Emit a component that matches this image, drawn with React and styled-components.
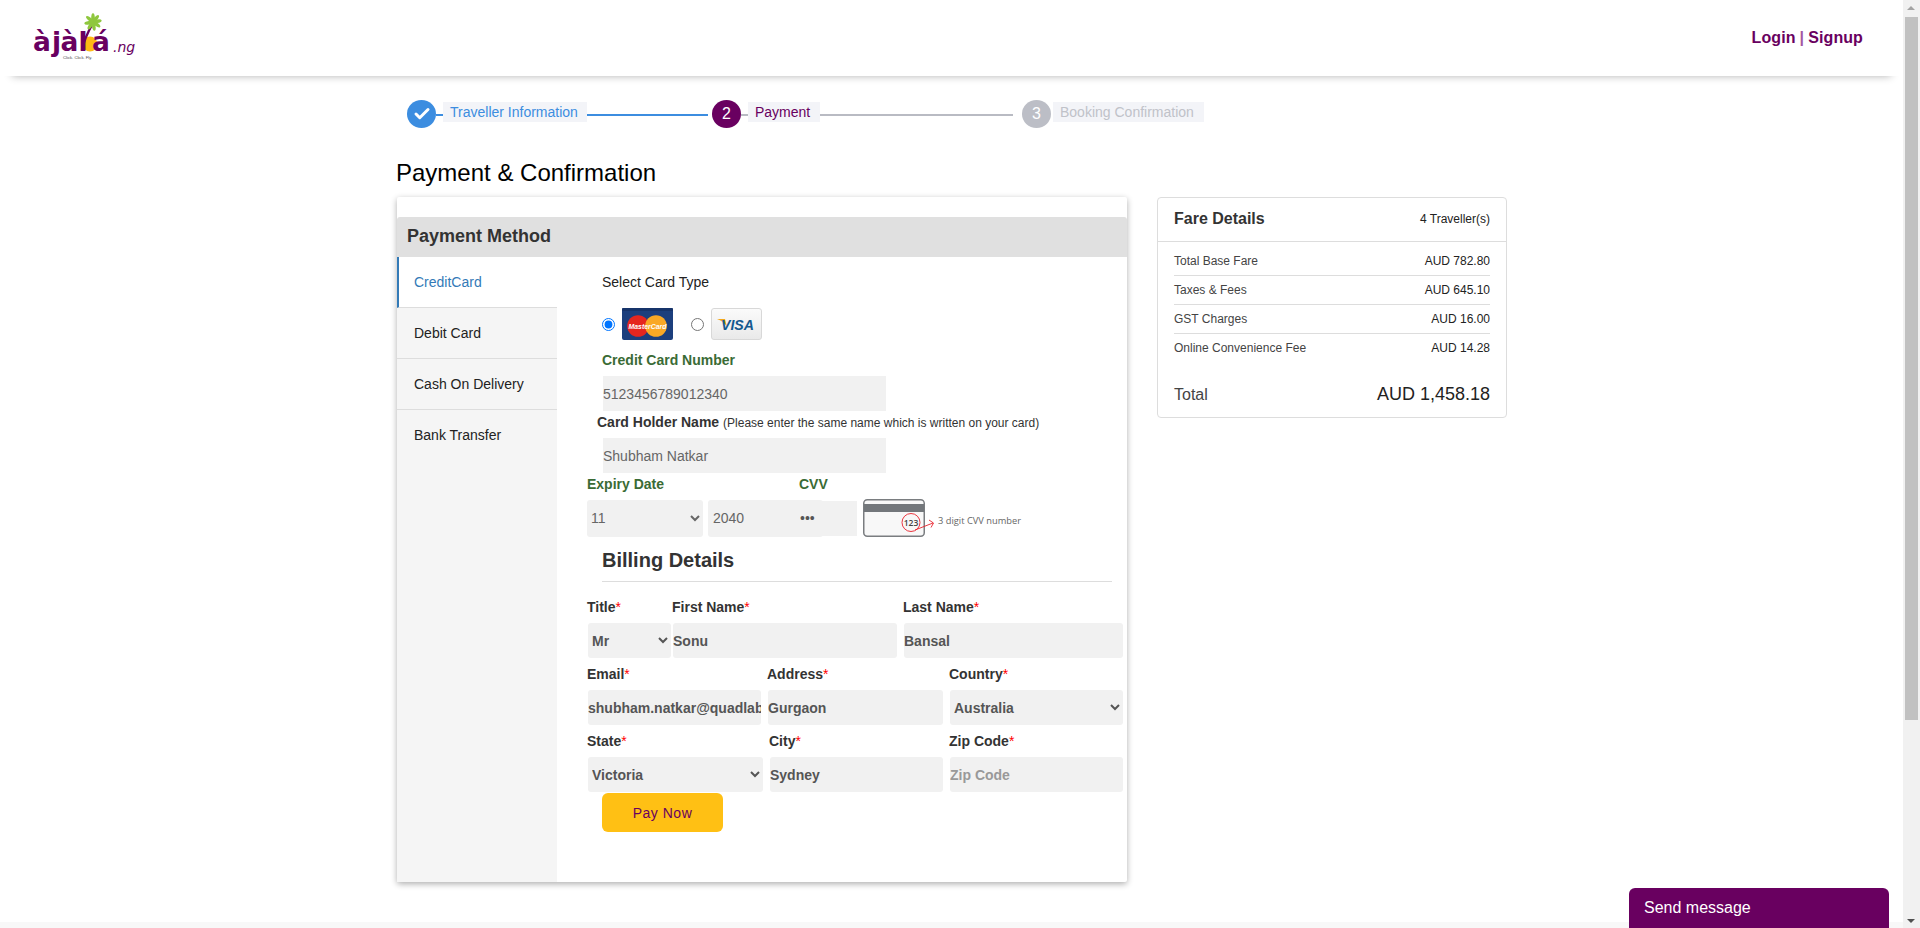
import React from "react";
import styled, { createGlobalStyle } from "styled-components";
import { Check } from "lucide-react";

const PURPLE = "#690060";
const BLUE = "#3c8de0";
const GREY = "#b9bbc3";
const GREEN = "#3a6b35";
const FIELD = "#f1f1f1";

const Global = createGlobalStyle`
  html, body { margin: 0; padding: 0; overflow: hidden; background: #fff; }
  body { font-family: "Liberation Sans", Arial, sans-serif; font-size: 14px; color: #222; }
  * { box-sizing: border-box; }
`;

const Page = styled.div`
  width: 1903px;
  height: 928px;
  display: flex;
  flex-direction: column;
`;

const Header = styled.header`
  height: 76px;
  flex: none;
  padding: 0 40px 0 30px;
  display: flex;
  align-items: center;
  justify-content: space-between;
  background: #fff;
  box-shadow: 0 12px 8px -12px rgba(0, 0, 0, 0.3);
`;

const LogoWrap = styled.a`
  display: block;
  width: 110px;
  height: 52px;
`;

const AuthLinks = styled.div`
  font-size: 16px;
  font-weight: bold;
  color: ${PURPLE};
  letter-spacing: 0.1px;
`;

const Sep = styled.span`
  color: #a4589f;
  margin: 0 4px;
`;

const Main = styled.main`
  width: 1111px;
  margin: 0 auto;
  flex: 1;
`;

const Stepper = styled.div`
  margin-top: 24px;
  padding-left: 11px;
  height: 28px;
  display: flex;
  align-items: center;
`;

const Circle = styled.div`
  width: 29px;
  height: 28px;
  flex: none;
  border-radius: 50%;
  background: ${(p) => p.$color};
  color: #fff;
  font-size: 16px;
  display: flex;
  align-items: center;
  justify-content: center;
  margin-left: ${(p) => p.$gap || 0}px;
`;

const StepLine = styled.div`
  height: 2px;
  margin-top: 2px;
  flex: none;
  width: ${(p) => p.$w}px;
  background: ${(p) => p.$color};
`;

const StepLabel = styled.div`
  width: ${(p) => p.$w}px;
  height: 20px;
  line-height: 20px;
  margin-bottom: 4px;
  margin-left: ${(p) => p.$gap || 0}px;
  padding-left: 7px;
  flex: none;
  white-space: nowrap;
  background: #f3f4f8;
  color: ${(p) => p.$color};
`;

const Title = styled.h1`
  margin: 30px 0 0;
  font-size: 24px;
  line-height: 30px;
  font-weight: normal;
  color: #000;
`;

const Columns = styled.div`
  margin-top: 9px;
  display: flex;
  align-items: flex-start;
  gap: 30px;
`;

const PaymentCard = styled.section`
  width: 730px;
  height: 685px;
  padding-top: 20px;
  margin-left: 1px;
  display: flex;
  flex-direction: column;
  background: #fff;
  box-shadow: 0 2px 6px rgba(0, 0, 0, 0.32);
  border-radius: 2px;
`;

const Band = styled.h2`
  margin: 0;
  height: 40px;
  line-height: 39px;
  flex: none;
  padding-left: 10px;
  font-size: 18px;
  font-weight: bold;
  color: #333;
  background: #e0e0e0;
  border-radius: 3px 3px 0 0;
`;

const Body = styled.div`
  flex: 1;
  display: flex;
`;

const Sidebar = styled.nav`
  width: 160px;
  flex: none;
  background: #f5f5f5;
`;

const Tab = styled.div`
  height: 51px;
  padding-left: ${(p) => (p.$active ? 15 : 17)}px;
  line-height: 50px;
  font-size: 14px;
  color: ${(p) => (p.$active ? "#337ab7" : "#222")};
  background: ${(p) => (p.$active ? "#fff" : "transparent")};
  border-left: ${(p) => (p.$active ? "2px solid #337ab7" : "none")};
  border-bottom: ${(p) => (p.$last ? "none" : "1px solid #ddd")};
`;

const Content = styled.div`
  flex: 1;
  padding: 15px 0 0 30px;
`;

const Plain = styled.div`
  margin-left: 15px;
  line-height: 20px;
  color: #222;
`;

const CardChoice = styled.div`
  margin: 16px 0 0 15px;
  height: 32px;
  display: flex;
  align-items: center;
`;

const Radio = styled.input`
  width: 13px;
  height: 13px;
  margin: 0 7px 0 ${(p) => p.$left || 0}px;
  flex: none;
`;

const GreenLabel = styled.label`
  display: block;
  font-weight: bold;
  line-height: 20px;
  color: ${GREEN};
  margin: ${(p) => p.$top || 0}px 0 0 ${(p) => p.$left || 0}px;
  width: ${(p) => (p.$w ? p.$w + "px" : "auto")};
  flex: none;
`;

const HolderLabel = styled.label`
  display: block;
  margin: 1px 0 0 10px;
  font-weight: bold;
  line-height: 20px;
  color: #333;
`;

const HolderNote = styled.span`
  font-size: 12px;
  font-weight: normal;
`;

const TextField = styled.input`
  display: block;
  height: 35px;
  border: none;
  outline: none;
  padding: 0;
  background: ${FIELD};
  color: #666;
  font-family: inherit;
  font-size: 14px;
  width: ${(p) => p.$w}px;
  margin: ${(p) => p.$top || 0}px 0 0 ${(p) => p.$left || 0}px;
`;

const ExpiryLabels = styled.div`
  display: flex;
  margin-top: 1px;
`;

const ExpiryRow = styled.div`
  margin-top: 5px;
  height: 38px;
  display: flex;
  align-items: center;
`;

const MonthSelect = styled.select`
  width: 116px;
  height: 37px;
  border: none;
  outline: none;
  border-radius: 3px;
  background: ${FIELD};
  color: #666;
  font-family: inherit;
  font-size: 14px;
  flex: none;
`;

const YearField = styled.input`
  width: 115px;
  height: 37px;
  margin-left: 5px;
  padding: 0 5px;
  border: none;
  outline: none;
  border-radius: 3px;
  background: ${FIELD};
  color: #666;
  font-family: inherit;
  font-size: 14px;
  flex: none;
`;

const CvvField = styled.input`
  width: 58px;
  height: 35px;
  margin-left: -24px;
  padding: 0 1px;
  border: none;
  outline: none;
  background: ${FIELD};
  color: #555;
  font-family: inherit;
  font-size: 14px;
  flex: none;
`;

const CvvCardWrap = styled.div`
  width: 62px;
  height: 38px;
  margin-left: 6px;
  flex: none;
  display: flex;
  svg { flex: none; }
`;

const CvvHint = styled.span`
  margin: 5px 0 0 13px;
  font-family: "Open Sans", sans-serif;
  font-size: 9.3px;
  color: #666;
  white-space: nowrap;
`;

const BillingTitle = styled.h3`
  margin: 11px 0 0 15px;
  font-size: 20px;
  line-height: 24px;
  font-weight: bold;
  color: #333;
`;

const Rule = styled.hr`
  margin: 9px 0 0 15px;
  width: 510px;
  height: 1px;
  border: none;
  background: #ddd;
`;

const FormRow = styled.div`
  display: grid;
  grid-template-columns: ${(p) => p.$cols};
  margin-top: ${(p) => p.$top}px;
`;

const Cell = styled.div`
  display: flex;
  flex-direction: column;
  gap: 6px;
`;

const FieldLabel = styled.label`
  font-weight: bold;
  line-height: 20px;
  color: #333;
  white-space: nowrap;
`;

const Star = styled.span`
  color: #f00;
  font-weight: normal;
`;

const BoldInput = styled.input`
  display: block;
  width: ${(p) => p.$w}px;
  height: 35px;
  margin-left: 1px;
  padding: 0;
  border: none;
  outline: none;
  border-radius: 3px;
  background: ${FIELD};
  color: #555;
  font-family: inherit;
  font-size: 14px;
  font-weight: bold;
  &::placeholder { color: #999; }
`;

const BoldSelect = styled.select`
  display: block;
  width: ${(p) => p.$w}px;
  height: 35px;
  margin-left: 1px;
  border: none;
  outline: none;
  border-radius: 3px;
  background: ${FIELD};
  color: #555;
  font-family: inherit;
  font-size: 14px;
  font-weight: bold;
`;

const PayButton = styled.button`
  display: block;
  width: 121px;
  height: 39px;
  margin: 1px 0 0 15px;
  border: none;
  border-radius: 6px;
  background: #ffc014;
  color: ${PURPLE};
  font-family: inherit;
  font-size: 14px;
  letter-spacing: 0.5px;
`;

const FareCard = styled.aside`
  width: 350px;
  height: 221px;
  padding: 0 16px;
  background: #fff;
  border: 1px solid #ddd;
  border-radius: 4px;
`;

const FareHead = styled.div`
  height: 44px;
  margin: 0 -16px;
  padding: 0 16px 2px;
  display: flex;
  align-items: center;
  justify-content: space-between;
  border-bottom: 1px solid #ddd;
`;

const FareTitle = styled.strong`
  font-size: 16px;
  color: #333;
`;

const FareCount = styled.span`
  font-size: 12px;
  color: #222;
`;

const FareRows = styled.div`
  padding-top: 5px;
`;

const FareRow = styled.div`
  height: 29px;
  display: flex;
  align-items: center;
  justify-content: space-between;
  font-size: 12px;
  border-bottom: 1px solid ${(p) => (p.$last ? "transparent" : "#ddd")};
  span:first-child { color: #444; }
  span:last-child { color: #222; }
`;

const FareTotal = styled.div`
  margin-top: 21px;
  display: flex;
  align-items: center;
  justify-content: space-between;
  span:first-child { font-size: 16px; color: #444; }
  span:last-child { font-size: 18px; color: #222; }
`;

const FooterStrip = styled.div`
  height: 6px;
  flex: none;
  background: #f8f8f8;
`;

const SendMessage = styled.div`
  position: fixed;
  right: 31px;
  bottom: 0;
  width: 260px;
  height: 40px;
  padding-left: 15px;
  line-height: 40px;
  font-size: 16px;
  color: #fff;
  background: ${PURPLE};
  border-radius: 6px 6px 0 0;
`;

const ScrollTrack = styled.div`
  position: fixed;
  top: 0;
  right: 0;
  width: 17px;
  height: 928px;
  background: #f1f1f1;
`;

const ScrollThumb = styled.div`
  position: absolute;
  top: 17px;
  left: 2px;
  width: 13px;
  height: 703px;
  background: #c1c1c1;
`;

const ScrollArrow = styled.div`
  position: absolute;
  left: 4px;
  ${(p) => (p.$down ? "bottom: 5px;" : "top: 6px;")}
  width: 0;
  height: 0;
  border-left: 4px solid transparent;
  border-right: 4px solid transparent;
  ${(p) => (p.$down ? "border-top: 4px solid #505050;" : "border-bottom: 4px solid #a3a3a3;")}
`;

function Logo() {
  const leaves = [0, 40, 80, 125, 170, 215, 260, 310];
  return (
    <svg width="110" height="52" viewBox="0 0 110 52">
      <circle cx="60" cy="32" r="7.5" fill="#fdb913" />
      <path d="M52 38 C54 28 59 18 63 11" fill="none" stroke={PURPLE} strokeWidth="2.4" />
      {leaves.map((a) => (
        <ellipse key={a} cx="63" cy="6" rx="1.8" ry="4.8" fill="#8fc73e" transform={`rotate(${a} 63 10)`} />
      ))}
      <text x="3 22 30.5 48.5 62" y="39" fontFamily="DejaVu Sans, sans-serif" fontWeight="bold" fontSize="26.5" fill={PURPLE}>
        àjàlá
      </text>
      <text x="83" y="40" fontFamily="DejaVu Sans, sans-serif" fontStyle="italic" fontSize="14" fill={PURPLE}>
        .ng
      </text>
      <text x="33" y="46.5" fontFamily="Liberation Sans, sans-serif" fontSize="4.2" fill="#444">
        Click. Click. Fly.
      </text>
    </svg>
  );
}

function MasterCard() {
  return (
    <svg width="51" height="32" viewBox="0 0 51 32">
      <rect width="51" height="32" rx="2" fill="#1c3f7d" />
      <rect width="51" height="3" rx="1" fill="#17346a" />
      <circle cx="16" cy="18" r="10.8" fill="#e5261f" />
      <circle cx="34" cy="18" r="10.8" fill="#f9a825" />
      <text x="6.5" y="20.5" textLength="38" lengthAdjust="spacingAndGlyphs" fontFamily="Liberation Sans, sans-serif" fontWeight="bold" fontStyle="italic" fontSize="7.6" fill="#fff">
        MasterCard
      </text>
    </svg>
  );
}

function VisaCard() {
  return (
    <svg width="51" height="32" viewBox="0 0 51 32">
      <defs>
        <linearGradient id="visaBg" x1="0" y1="0" x2="0" y2="1">
          <stop offset="0" stopColor="#fbfbfb" />
          <stop offset="1" stopColor="#e9e9e9" />
        </linearGradient>
      </defs>
      <rect x="0.5" y="0.5" width="50" height="31" rx="2.5" fill="url(#visaBg)" stroke="#d8d8d8" />
      <path d="M6 11 L14 11 L16 19 C14 15 10 12.5 6 11 Z" fill="#f2a81d" />
      <text x="10" y="22" textLength="33" lengthAdjust="spacingAndGlyphs" fontFamily="Liberation Sans, sans-serif" fontWeight="bold" fontStyle="italic" fontSize="15" fill="#15598f">
        VISA
      </text>
    </svg>
  );
}

function CvvCard() {
  return (
    <svg width="75" height="38" viewBox="0 0 75 38">
      <rect x="0.75" y="0.75" width="60.5" height="36.5" rx="3.5" fill="#f8f8f8" stroke="#7a7d80" strokeWidth="1.5" />
      <rect x="1" y="5" width="60" height="8" fill="#73777b" />
      <text x="48" y="26.5" textAnchor="middle" fontFamily="Open Sans, sans-serif" fontSize="8.5" fontWeight="600" fill="#444">
        123
      </text>
      <circle cx="48" cy="23.5" r="9" fill="none" stroke="#e8202a" strokeWidth="0.9" />
      <path d="M52 31 L70 24 M66 21 L70.5 24 L68 28.5" fill="none" stroke="#e8202a" strokeWidth="0.9" />
    </svg>
  );
}

const Req = ({ children }) => (
  <FieldLabel>
    {children}
    <Star>*</Star>
  </FieldLabel>
);

export default function App() {
  return (
    <>
      <Global />
      <Page>
        <Header>
          <LogoWrap>
            <Logo />
          </LogoWrap>
          <AuthLinks>
            Login<Sep>|</Sep>Signup
          </AuthLinks>
        </Header>

        <Main>
          <Stepper>
            <Circle $color={BLUE}>
              <Check size={18} strokeWidth={4} />
            </Circle>
            <StepLine $w={7} $color={BLUE} />
            <StepLabel $w={144} $color={BLUE}>Traveller Information</StepLabel>
            <StepLine $w={121} $color={BLUE} />
            <Circle $color={PURPLE} $gap={4}>2</Circle>
            <StepLine $w={7} $color={GREY} />
            <StepLabel $w={72} $color={PURPLE}>Payment</StepLabel>
            <StepLine $w={193} $color={GREY} />
            <Circle $color="#bcbec6" $gap={9}>3</Circle>
            <StepLabel $w={151} $color="#c0c2c9" $gap={2}>Booking Confirmation</StepLabel>
          </Stepper>

          <Title>Payment &amp; Confirmation</Title>

          <Columns>
            <PaymentCard>
              <Band>Payment Method</Band>
              <Body>
                <Sidebar>
                  <Tab $active>CreditCard</Tab>
                  <Tab>Debit Card</Tab>
                  <Tab>Cash On Delivery</Tab>
                  <Tab $last>Bank Transfer</Tab>
                </Sidebar>
                <Content>
                  <Plain>Select Card Type</Plain>
                  <CardChoice>
                    <Radio type="radio" name="card" defaultChecked />
                    <MasterCard />
                    <Radio type="radio" name="card" $left={18} />
                    <VisaCard />
                  </CardChoice>

                  <GreenLabel $top={10} $left={15}>Credit Card Number</GreenLabel>
                  <TextField $w={283} $top={6} $left={16} defaultValue="5123456789012340" />

                  <HolderLabel>
                    Card Holder Name <HolderNote>(Please enter the same name which is written on your card)</HolderNote>
                  </HolderLabel>
                  <TextField $w={283} $top={5} $left={16} defaultValue="Shubham Natkar" />

                  <ExpiryLabels>
                    <GreenLabel $w={212}>Expiry Date</GreenLabel>
                    <GreenLabel>CVV</GreenLabel>
                  </ExpiryLabels>
                  <ExpiryRow>
                    <MonthSelect defaultValue="11">
                      <option value="11">11</option>
                    </MonthSelect>
                    <YearField defaultValue="2040" />
                    <CvvField type="password" defaultValue="123" />
                    <CvvCardWrap>
                      <CvvCard />
                    </CvvCardWrap>
                    <CvvHint>3 digit CVV number</CvvHint>
                  </ExpiryRow>

                  <BillingTitle>Billing Details</BillingTitle>
                  <Rule />

                  <FormRow $cols="85px 231px 1fr" $top={15}>
                    <Cell>
                      <Req>Title</Req>
                      <BoldSelect $w={83} defaultValue="Mr">
                        <option>Mr</option>
                      </BoldSelect>
                    </Cell>
                    <Cell>
                      <Req>First Name</Req>
                      <BoldInput $w={224} defaultValue="Sonu" />
                    </Cell>
                    <Cell>
                      <Req>Last Name</Req>
                      <BoldInput $w={219} defaultValue="Bansal" />
                    </Cell>
                  </FormRow>

                  <FormRow $cols="180px 182px 1fr" $top={6}>
                    <Cell>
                      <Req>Email</Req>
                      <BoldInput $w={173} defaultValue="shubham.natkar@quadlabs.com" />
                    </Cell>
                    <Cell>
                      <Req>Address</Req>
                      <BoldInput $w={175} defaultValue="Gurgaon" />
                    </Cell>
                    <Cell>
                      <Req>Country</Req>
                      <BoldSelect $w={173} defaultValue="Australia">
                        <option>Australia</option>
                      </BoldSelect>
                    </Cell>
                  </FormRow>

                  <FormRow $cols="182px 180px 1fr" $top={6}>
                    <Cell>
                      <Req>State</Req>
                      <BoldSelect $w={175} defaultValue="Victoria">
                        <option>Victoria</option>
                      </BoldSelect>
                    </Cell>
                    <Cell>
                      <Req>City</Req>
                      <BoldInput $w={173} defaultValue="Sydney" />
                    </Cell>
                    <Cell>
                      <Req>Zip Code</Req>
                      <BoldInput $w={173} placeholder="Zip Code" />
                    </Cell>
                  </FormRow>

                  <PayButton>Pay Now</PayButton>
                </Content>
              </Body>
            </PaymentCard>

            <FareCard>
              <FareHead>
                <FareTitle>Fare Details</FareTitle>
                <FareCount>4 Traveller(s)</FareCount>
              </FareHead>
              <FareRows>
                <FareRow><span>Total Base Fare</span><span>AUD 782.80</span></FareRow>
                <FareRow><span>Taxes &amp; Fees</span><span>AUD 645.10</span></FareRow>
                <FareRow><span>GST Charges</span><span>AUD 16.00</span></FareRow>
                <FareRow $last><span>Online Convenience Fee</span><span>AUD 14.28</span></FareRow>
              </FareRows>
              <FareTotal>
                <span>Total</span>
                <span>AUD 1,458.18</span>
              </FareTotal>
            </FareCard>
          </Columns>
        </Main>

        <FooterStrip />
      </Page>

      <SendMessage>Send message</SendMessage>
      <ScrollTrack>
        <ScrollArrow />
        <ScrollThumb />
        <ScrollArrow $down />
      </ScrollTrack>
    </>
  );
}
